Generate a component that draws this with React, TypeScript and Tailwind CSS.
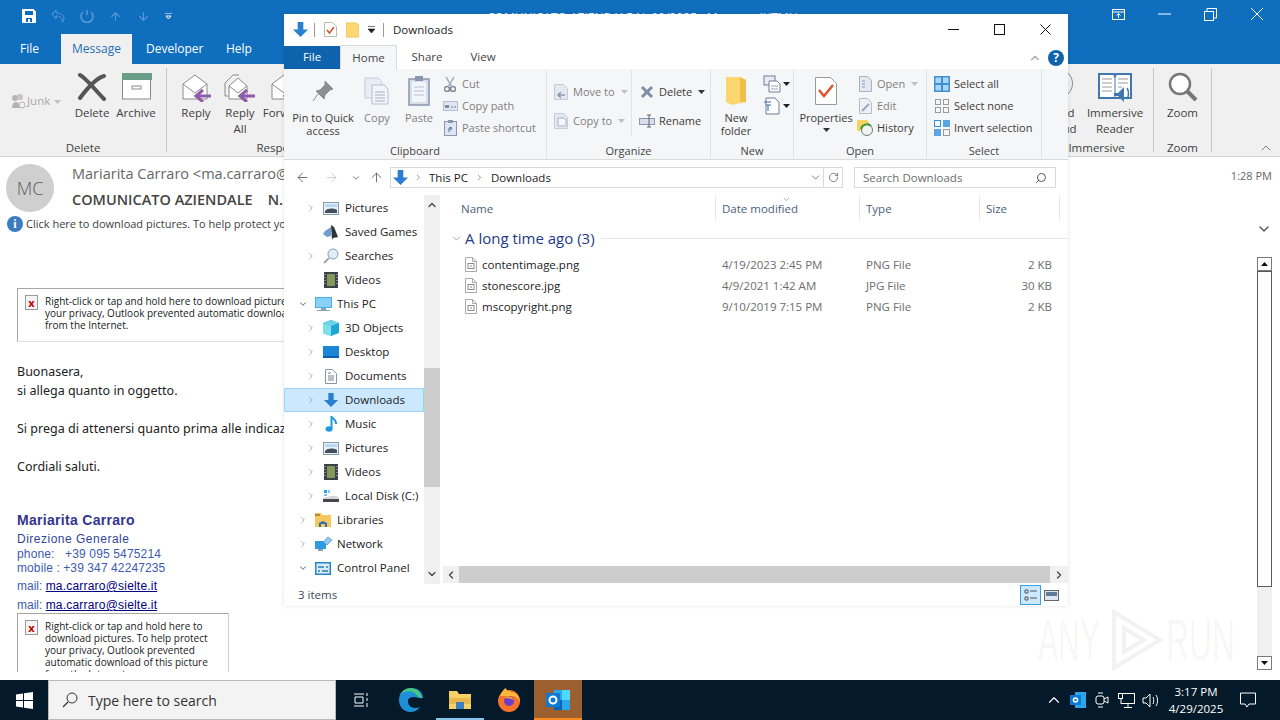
import { ReactNode } from "react";
import { ArrowLeft, ArrowRight, ArrowUp, ChevronDown, ChevronRight, ChevronUp, RotateCw, Search } from "lucide-react";

function Svg({ w = 16, h = 16, vb, children }: { w?: number; h?: number; vb?: string; children: ReactNode }) {
  return (
    <svg width={w} height={h} viewBox={vb ?? `0 0 ${w} ${h}`} fill="none" className="shrink-0">
      {children}
    </svg>
  );
}

const Caret = ({ color = "#444" }: { color?: string }) => (
  <Svg w={7} h={4}><path d="M0 0h7L3.5 4z" fill={color} /></Svg>
);

const BlueDown = ({ s = 18 }: { s?: number }) => (
  <Svg w={s} h={s} vb="0 0 18 18"><path d="M6 1h6v8h5l-8 8-8-8h5z" fill="#2a7fd0" /></Svg>
);

const FileIco = () => (
  <Svg w={12} h={15}>
    <path d="M.5.5h7l4 4v10H.5z" fill="#fff" stroke="#a9a9a9" />
    <path d="M7.5.5v4h4" stroke="#a9a9a9" />
    <rect x="3" y="6.5" width="6" height="5" stroke="#8b8b8b" />
    <rect x="5" y="8.5" width="2" height="1" fill="#8b8b8b" />
  </Svg>
);

const BrokenImg = () => (
  <div className="w-[13px] h-[15px] shrink-0 border border-[#9a9a9a] bg-[#f6f3f3] flex items-center justify-center text-[#c00000] text-[11px] font-bold leading-none">
    x
  </div>
);

/* ---------- Outlook ---------- */

function EnvelopeReply({ all }: { all?: boolean }) {
  return (
    <Svg w={32} h={30}>
      {all && <path d="M1 11 9 3h6M1 11v13h3" stroke="#8a8a8a" />}
      <path d={all ? "M5 14l9-8 9 8v13H5z" : "M3 12l12-9 12 9v15H3z"} fill="#fff" stroke="#8a8a8a" />
      <path d={all ? "M5 14l9 7 9-7" : "M3 12l12 9 12-9"} stroke="#8a8a8a" />
      <path d="M17 24h14M23 18l-7 6 7 6" stroke="#8f5cab" strokeWidth="3" />
    </Svg>
  );
}

function OutlookBtn({ w, icon, lines }: { w: number; icon: ReactNode; lines: string[] }) {
  return (
    <div className="flex flex-col items-center shrink-0" style={{ width: w }}>
      <div className="h-[37px] flex items-center justify-center">{icon}</div>
      {lines.map((l) => (
        <div key={l} className="leading-[16px] whitespace-nowrap">{l}</div>
      ))}
    </div>
  );
}

function OutlookGroup({ label, w, children, sep = true }: { label: string; w: number; children?: ReactNode; sep?: boolean }) {
  return (
    <div className="shrink-0 flex h-[88px]" style={{ width: w }}>
      <div className="flex-1 min-w-0 flex flex-col">
        <div className="flex-1 flex">{children}</div>
        <div className="text-center leading-[16px] h-[16px] whitespace-nowrap">{label}</div>
      </div>
      {sep && <div className="w-px h-[84px] bg-[#c6c6c6]" />}
    </div>
  );
}

function OutlookRibbon() {
  return (
    <div className="h-[93px] bg-[#f0f0f0] border-b border-[#d2d2d2] flex justify-between pt-[4px] text-[#404040] text-[11.5px] shrink-0">
      <div className="flex">
        <OutlookGroup label="Delete" w={167}>
          <div className="flex w-[76px] pl-[11px] pt-[25px] text-[#a8a8a8] gap-[2px] items-start">
            <Svg w={14} h={16}>
              <circle cx="4" cy="5" r="3" fill="#b4b4b4" />
              <circle cx="9" cy="4" r="3" fill="#c4c4c4" />
              <path d="M1 15c0-4 2-6 4-6s4 2 4 6z" fill="#b4b4b4" />
              <circle cx="11" cy="12" r="3" fill="#f0f0f0" stroke="#b4b4b4" />
            </Svg>
            <span className="leading-[16px]">Junk</span>
            <span className="pt-[7px] pl-[2px]"><Caret color="#c0c0c0" /></span>
          </div>
          <OutlookBtn w={32} lines={["Delete"]} icon={
            <Svg w={30} h={28}><path d="M3 2c6 3 17 17 24 24M27 3C19 5 9 17 3 25" stroke="#555" strokeWidth="4" strokeLinecap="round" /></Svg>
          } />
          <OutlookBtn w={56} lines={["Archive"]} icon={
            <Svg w={31} h={27}>
              <rect x="1.5" y="1" width="28" height="25" fill="#fff" stroke="#8a8a8a" />
              <rect x="1" y="0" width="30" height="7" fill="#6b9d8b" />
              <rect x="11" y="13" width="9" height="3" stroke="#8a8a8a" />
            </Svg>
          } />
        </OutlookGroup>
        <OutlookGroup label="Respond" w={226} sep={false}>
          <div className="flex pl-[7px]">
            <OutlookBtn w={44} lines={["Reply"]} icon={<EnvelopeReply />} />
            <OutlookBtn w={44} lines={["Reply", "All"]} icon={<EnvelopeReply all />} />
            <OutlookBtn w={46} lines={["Forward"]} icon={<EnvelopeReply />} />
          </div>
        </OutlookGroup>
      </div>
      <div className="flex">
        <OutlookGroup label="Immersive" w={114}>
          <OutlookBtn w={42} lines={["Read", "Aloud"]} icon={
            <Svg w={24} h={30}>
              <path d="M2 29l5-13 5 13z" fill="#555" />
              <path d="M15 4c4 4 4 10 0 15M19 1c6 6 6 15 0 21" stroke="#888" />
            </Svg>
          } />
          <OutlookBtn w={66} lines={["Immersive", "Reader"]} icon={
            <Svg w={34} h={30}>
              <path d="M1 2h15l1 2 1-2h15v24H1z" fill="#fff" stroke="#3f77ae" strokeWidth="2" />
              <path d="M17 4v22" stroke="#3f77ae" />
              <path d="M4 7h10M4 11h10M4 15h10M4 19h10M20 7h10M20 11h10M20 15h4" stroke="#9a9a9a" />
              <path d="M16 21h4l6-6v15l-6-6h-4z" fill="#3f77ae" />
              <path d="M29 16c2 3 2 8 0 11" stroke="#3f77ae" strokeWidth="1.5" />
            </Svg>
          } />
        </OutlookGroup>
        <OutlookGroup label="Zoom" w={58}>
          <OutlookBtn w={57} lines={["Zoom"]} icon={
            <Svg w={30} h={30}>
              <circle cx="12" cy="12" r="10" stroke="#777" strokeWidth="2.5" fill="#fff" />
              <path d="M19 19l9 9" stroke="#777" strokeWidth="4" />
            </Svg>
          } />
        </OutlookGroup>
        <div className="w-[68px] flex flex-col justify-end items-end pr-[6px]">
          <ChevronUp size={16} strokeWidth={1.25} className="text-[#666]" />
        </div>
      </div>
    </div>
  );
}

function QuickAccess() {
  return (
    <div className="h-[32px] relative flex items-center pl-[22px] gap-[15px] text-white shrink-0">
      <Svg w={14} h={14}>
        <path d="M.5.5h11l2 2v11H.5z" fill="#fff" stroke="#fff" />
        <rect x="3" y="2" width="8" height="4" fill="#0f6cbd" />
        <rect x="4" y="9" width="6" height="4" fill="#0f6cbd" />
        <rect x="6" y="10" width="2" height="3" fill="#fff" />
      </Svg>
      <Svg w={14} h={14}><path d="M1 5l4-4v3c5 0 8 2 8 6 0 1-1 3-2 3 1-4-2-6-6-6v3z" stroke="#5a9bd8" /></Svg>
      <Svg w={14} h={14}><path d="M3 3a6 6 0 1 0 8 0M7 1v5" stroke="#5a9bd8" strokeWidth="1.5" /></Svg>
      <span className="text-[#5a9bd8]"><ArrowUp size={13} /></span>
      <span className="text-[#5a9bd8]"><ArrowUp size={13} className="rotate-180" /></span>
      <Svg w={7} h={7}><path d="M0 0h7M1 3h5l-2.5 3z" stroke="#fff" /></Svg>
      <div className="absolute left-[487px] top-[10px] text-[12px] text-[#e8f0fa] whitespace-nowrap leading-[16px]">
        COMUNICATO AZIENDALE N. 00/2025 - Message (HTML)
      </div>
      <div className="absolute right-[16px] top-[7px] flex items-center gap-[33px]">
        <Svg w={13} h={11}>
          <rect x=".5" y=".5" width="12" height="10" stroke="#fff" />
          <path d="M1 3h11M6.5 9V5M4.500 6.500l2-2 2 2" stroke="#fff" />
        </Svg>
        <Svg w={13} h={2}><path d="M0 1h13" stroke="#fff" /></Svg>
        <Svg w={13} h={13}>
          <rect x=".5" y="3.500" width="9" height="9" stroke="#fff" />
          <path d="M3 3V.5h9.500V10H10" stroke="#fff" />
        </Svg>
        <Svg w={14} h={14}><path d="M1 1l12 12M13 1L1 13" stroke="#fff" /></Svg>
      </div>
    </div>
  );
}

function OutlookTabs() {
  return (
    <div className="h-[32px] flex items-end text-[12px] text-white shrink-0">
      <div className="w-[61px] h-[30px] pl-[20px] leading-[30px]">File</div>
      <div className="w-[71px] h-[30px] bg-[#f0f0f0] text-[#1e6fb8] text-center leading-[30px]">Message</div>
      <div className="w-[94px] h-[30px] pl-[14px] leading-[30px]">Developer</div>
      <div className="w-[50px] h-[30px] leading-[30px]">Help</div>
    </div>
  );
}

function BrokenBox({ lines, width, height }: { lines: string[]; width: number; height: number }) {
  return (
    <div className="border border-[#a6a6a6] border-r-[#d0d0d0] border-b-[#e0e0e0] flex gap-[7px] pl-[7px] pt-[6px] overflow-hidden" style={{ width, height }}>
      <BrokenImg />
      <div className="text-[10px] leading-[12px] text-[#202020] whitespace-nowrap">
        {lines.map((l) => <div key={l}>{l}</div>)}
      </div>
    </div>
  );
}

function MessageBody() {
  return (
    <div className="flex-1 flex min-h-0">
      <div className="flex-1 h-[427px] overflow-hidden pt-[43px] pl-[17px]">
        <BrokenBox
          width={640}
          height={54}
          lines={[
            "Right-click or tap and hold here to download pictures. To help protect",
            "your privacy, Outlook prevented automatic download of this picture",
            "from the Internet.",
          ]}
        />
        <div className="mt-[20px] text-[12.5px] leading-[19px] text-[#222] font-['Noto_Sans',sans-serif]">
          <p>Buonasera,</p>
          <p>si allega quanto in oggetto.</p>
          <p className="mt-[19px] whitespace-nowrap">Si prega di attenersi quanto prima alle indicazioni riportate nel documento allegato.</p>
          <p className="mt-[19px]">Cordiali saluti.</p>
        </div>
        <div className="mt-[36px] font-['Liberation_Sans',sans-serif] text-[12px] leading-[14px] text-[#3d5bb0]">
          <p className="text-[14px] leading-[17px] font-bold text-[#33348e] tracking-[.3px]">Mariarita Carraro</p>
          <p className="mt-[2px] text-[#33469a] leading-[16px] tracking-[.5px]">Direzione Generale</p>
          <p className="leading-[14px] tracking-[.15px]">phone: &nbsp; +39 095 5475214</p>
          <p className="leading-[14px] tracking-[.1px]">mobile : +39 347 42247235</p>
          <p className="mt-[2px] leading-[19px]">mail: <span className="text-[#000080] underline tracking-[.2px]">ma.carraro@sielte.it</span></p>
          <p className="leading-[19px]">mail: <span className="text-[#000080] underline tracking-[.2px]">ma.carraro@sielte.it</span></p>
        </div>
        <div className="-mt-[2px]">
          <BrokenBox
            width={212}
            height={80}
            lines={[
              "Right-click or tap and hold here to",
              "download pictures. To help protect",
              "your privacy, Outlook prevented",
              "automatic download of this picture",
              "from the Internet.",
            ]}
          />
        </div>
      </div>
      <div className="w-[15px] mr-[8px] mt-[12px] h-[413px] flex flex-col bg-[#f0f0f0]">
        <div className="h-[14px] border border-[#7a7a7a] bg-white flex items-center justify-center rotate-180"><Caret color="#111" /></div>
        <div className="h-[316px] border border-[#5a5a5a] bg-white" />
        <div className="flex-1" />
        <div className="h-[14px] border border-[#7a7a7a] bg-white flex items-center justify-center"><Caret color="#111" /></div>
      </div>
    </div>
  );
}

function Outlook() {
  return (
    <div className="flex-1 min-h-0 flex flex-col">
      <div className="bg-[#106ebe]">
        <QuickAccess />
        <OutlookTabs />
      </div>
      <OutlookRibbon />
      <div className="h-[88px] shrink-0 text-[#404040]">
        <div className="h-[60px] flex pt-[7px] pl-[6px] pr-[8px]">
          <div className="w-[48px] h-[48px] rounded-full bg-[#cfcfcf] text-[#5c5c5c] text-[18px] flex items-center justify-center font-light">MC</div>
          <div className="ml-[18px] flex-1 whitespace-pre">
            <div className="text-[14.5px] leading-[20px] text-[#666]">Mariarita Carraro &lt;ma.carraro@sielte.it&gt;</div>
            <div className="mt-[6px] text-[14.5px] leading-[20px] font-semibold text-[#444]">COMUNICATO AZIENDALE    N.  00/2025</div>
          </div>
          <div className="text-[11px] text-[#666] leading-[24px]">1:28 PM</div>
        </div>
        <div className="flex items-center pl-[7px] pr-[8px] h-[14px] text-[11px]">
          <div className="w-[16px] h-[16px] rounded-full bg-[#3b7cc4] text-white text-[12px] font-bold text-center leading-[16px] font-['Liberation_Serif',serif] mr-[3px]">i</div>
          <span className="flex-1 whitespace-nowrap">Click here to download pictures. To help protect your privacy, Outlook prevented automatic download of some pictures in this message.</span>
          <ChevronDown size={16} className="text-[#555] mt-[10px]" />
        </div>
      </div>
      <MessageBody />
    </div>
  );
}

/* ---------- Explorer ---------- */

function SmallRow({ icon, label, dim, caret }: { icon: ReactNode; label: string; dim?: boolean; caret?: boolean }) {
  return (
    <div className={`h-[22px] flex items-center gap-[5px] whitespace-nowrap ${dim ? "text-[#7f7f7f]" : ""}`}>
      <span className="w-[14px] flex justify-center shrink-0">{icon}</span>
      {label}
      {caret && <span className="ml-[1px]"><Caret color={dim ? "#c0c0c0" : "#333"} /></span>}
    </div>
  );
}

function BigBtn({ w, icon, lines, dim, caret }: { w: number; icon: ReactNode; lines: string[]; dim?: boolean; caret?: boolean }) {
  return (
    <div className={`flex flex-col items-center shrink-0 ${dim ? "text-[#7f7f7f]" : ""}`} style={{ width: w }}>
      <div className="h-[41px] flex items-center justify-center">{icon}</div>
      {lines.map((l) => (
        <div key={l} className="leading-[13px] whitespace-nowrap">{l}</div>
      ))}
      {caret && <div className="mt-[4px]"><Caret color="#333" /></div>}
    </div>
  );
}

function Group({ label, w, children }: { label: string; w: number; children: ReactNode }) {
  return (
    <div className="shrink-0 flex flex-col border-r border-[#e2e3e4] h-[88px] mt-[1px]" style={{ width: w }}>
      <div className="flex-1 flex">{children}</div>
      <div className="h-[14px] leading-[14px] text-center text-[#444]">{label}</div>
    </div>
  );
}

const doc = "#fff";

function ExplorerRibbon() {
  return (
    <div className="h-[91px] bg-[#f5f6f7] border-b border-[#dadbdc] flex text-[11px] text-[#3c3c3c]">
      <Group label="Clipboard" w={263}>
        <BigBtn w={78} lines={["Pin to Quick", "access"]} icon={
          <Svg w={22} h={22}><path d="M13 1l8 8-3 1-5 5-1 4-8-8 4-1 5-5zM6 14l-5 7" fill="#8e8e8e" stroke="#8e8e8e" /></Svg>
        } />
        <BigBtn w={30} dim lines={["Copy"]} icon={
          <Svg w={26} h={28}>
            <path d="M1 1h13l4 4v16H1z" fill="#e9eef6" stroke="#c3cad8" />
            <path d="M8 8h12l4 4v15H8z" fill="#f3f5fa" stroke="#b5bdcd" />
            <path d="M11 15h10M11 18h10M11 21h10M11 24h10" stroke="#a4aec4" />
          </Svg>
        } />
        <BigBtn w={54} dim lines={["Paste"]} icon={
          <Svg w={22} h={30}>
            <rect x="1" y="3" width="20" height="26" fill="#d8dfec" stroke="#8a96ad" strokeWidth="1.5" />
            <rect x="4" y="6" width="14" height="20" fill="#f2f5fa" />
            <rect x="7" y="0" width="8" height="5" fill="#8a96ad" />
            <path d="M6 11h10M6 15h10M6 19h10" stroke="#b6c0d2" />
          </Svg>
        } />
        <div className="pt-[3px] ml-[-3px]">
          <SmallRow dim label="Cut" icon={
            <Svg w={12} h={16}><circle cx="3" cy="13" r="2.500" stroke="#7d8896" strokeWidth="1.5" /><circle cx="9" cy="13" r="2.500" stroke="#7d8896" strokeWidth="1.5" /><path d="M2 1l6 10M10 1L4 11" stroke="#a8b0bb" strokeWidth="1.5" /></Svg>
          } />
          <SmallRow dim label="Copy path" icon={
            <Svg w={15} h={10}><rect x=".5" y=".5" width="14" height="9" fill="#e0e6f2" stroke="#b4bfd4" /><path d="M2 4l1 3 1-3 1 3 1-3M8 6h2M11 6h2" stroke="#6d7d9c" /></Svg>
          } />
          <SmallRow dim label="Paste shortcut" icon={
            <Svg w={13} h={16}><rect x=".5" y="1.500" width="12" height="14" fill="#dfe5f0" stroke="#8a96ad" /><rect x="4" y="0" width="5" height="3" fill="#8a96ad" /><path d="M5 12V8h3M6 7l2 1.500L6 10" stroke="#4f6a94" /></Svg>
          } />
        </div>
      </Group>
      <Group label="Organize" w={164}>
        <div className="pt-[11px] pl-[7px] w-[85px] border-r border-[#e2e3e4] mb-[8px] text-[#7f7f7f]">
          <div className="h-[29px]">
            <SmallRow dim caret label="Move to" icon={
              <Svg w={14} h={16}><path d="M.5.5h9l4 4v11H.5z" fill="#e4e8f0" stroke="#c5ccd8" /><path d="M11 11H4M7 8l-3 3 3 3" stroke="#8b9ab3" strokeWidth="1.5" /></Svg>
            } />
          </div>
          <SmallRow dim caret label="Copy to" icon={
            <Svg w={14} h={16}><path d="M.5.5h9l4 4v11H.5z" fill="#e4e8f0" stroke="#c5ccd8" /><path d="M4 5h6l2 2v6H4z" fill="#f5f7fa" stroke="#a7b2c4" /></Svg>
          } />
        </div>
        <div className="pt-[11px] pl-[8px]">
          <div className="h-[29px]">
            <SmallRow caret label="Delete" icon={
              <Svg w={14} h={14}><path d="M2 2l10 10M12 2L2 12" stroke="#7d8ea6" strokeWidth="3" /></Svg>
            } />
          </div>
          <SmallRow label="Rename" icon={
            <Svg w={16} h={14}><rect x=".5" y="4.500" width="15" height="6" fill="#d7deea" stroke="#8a96ad" /><path d="M10 1v12M8 1h4M8 13h4" stroke="#55637a" /></Svg>
          } />
        </div>
      </Group>
      <Group label="New" w={83}>
        <BigBtn w={50} lines={["New", "folder"]} icon={
          <Svg w={22} h={30}><path d="M1 1h14l6 3v22l-14 3-6-3z" fill="#fcd770" /><path d="M15 1l6 3v22h-6z" fill="#f0bf49" /></Svg>
        } />
        <div className="pt-[3px] pl-[2px]">
          <div className="h-[22px] flex items-center gap-[2px]">
            <Svg w={18} h={18}><rect x="1" y="1" width="11" height="9" fill="#e8eef7" stroke="#6e7d94" /><path d="M6 6h8l3 3v8H6z" fill="#fff" stroke="#6e7d94" /><path d="M8 11h7M8 14h7" stroke="#9aa6b8" /></Svg>
            <Caret color="#222" />
          </div>
          <div className="h-[22px] flex items-center gap-[2px]">
            <Svg w={18} h={18}><path d="M3 1h9l4 4v12H3z" fill="#fff" stroke="#6e7d94" /><path d="M1 5h7M3 8h5M5 8v6" stroke="#2d6da8" /></Svg>
            <Caret color="#222" />
          </div>
        </div>
      </Group>
      <Group label="Open" w={133}>
        <BigBtn w={64} caret lines={["Properties"]} icon={
          <Svg w={22} h={28}>
            <path d="M.5.500h15l6 6v21H.5z" fill="#fff" stroke="#9a9a9a" />
            <path d="M4 13l5 6 9-11" stroke="#e0542b" strokeWidth="2.500" />
          </Svg>
        } />
        <div className="pt-[3px]">
          <SmallRow dim caret label="Open" icon={
            <Svg w={13} h={16}><path d="M.5.500h8l4 4v11H.5z" fill="#e4e8f0" stroke="#a8b2c4" /><path d="M3 5h3M3 8h3M3 11h3" stroke="#8b9ab3" /></Svg>
          } />
          <SmallRow dim label="Edit" icon={
            <Svg w={13} h={16}><path d="M.5.500h8l4 4v11H.5z" fill="#eef1f6" stroke="#b4bdcc" /><path d="M3 13l7-7" stroke="#9aa8bd" strokeWidth="2" /></Svg>
          } />
          <SmallRow label="History" icon={
            <Svg w={16} h={16}>
              <path d="M0 0h10l2 3v8H0z" fill="#f4d35e" />
              <circle cx="10" cy="10" r="5.500" fill="#f2f2f2" stroke="#777" />
              <path d="M4 9a6 6 0 0 1 10-3" stroke="#3a9a3a" strokeWidth="2" />
            </Svg>
          } />
        </div>
      </Group>
      <Group label="Select" w={115}>
        <div className="pt-[3px] pl-[8px] text-[#3c3c3c]">
          <SmallRow label="Select all" icon={
            <Svg w={16} h={16}><rect width="16" height="16" fill="#3d8fd6" /><rect x="1.500" y="1.500" width="5.500" height="5.500" fill="#a9d6f7" /><rect x="9" y="1.500" width="5.500" height="5.500" fill="#a9d6f7" /><rect x="1.500" y="9" width="5.500" height="5.500" fill="#a9d6f7" /><rect x="9" y="9" width="5.500" height="5.500" fill="#a9d6f7" /></Svg>
          } />
          <SmallRow label="Select none" icon={
            <Svg w={14} h={14}><rect x=".5" y=".5" width="5" height="5" stroke="#9a9a9a" /><rect x="8.500" y=".5" width="5" height="5" stroke="#9a9a9a" /><rect x=".5" y="8.500" width="5" height="5" stroke="#9a9a9a" /><rect x="8.500" y="8.500" width="5" height="5" stroke="#9a9a9a" /></Svg>
          } />
          <SmallRow label="Invert selection" icon={
            <Svg w={16} h={16}><rect x=".5" y=".5" width="6" height="6" stroke="#3d8fd6" /><rect x="9" y="0" width="7" height="7" fill="#5aa5e3" /><rect x="0" y="9" width="7" height="7" fill="#5aa5e3" /><rect x="9.500" y="9.500" width="6" height="6" stroke="#9a9a9a" /></Svg>
          } />
        </div>
      </Group>
    </div>
  );
}

function ExplorerTitle() {
  return (
    <>
      <div className="h-[31px] flex items-center pl-[8px] text-[11.5px] text-[#222]">
        <BlueDown s={17} />
        <div className="w-px h-[14px] bg-[#999] ml-[5px]" />
        <span className="ml-[9px]">
          <Svg w={13} h={15}><path d="M.5.500h8l4 4v10H.5z" fill={doc} stroke="#bba" /><path d="M3 8l2.500 3L10 5" stroke="#d8502a" strokeWidth="1.500" /></Svg>
        </span>
        <span className="ml-[9px]">
          <Svg w={13} h={16}><path d="M0 1h10l3 2v12H0z" fill="#fcd874" stroke="#efc45a" /></Svg>
        </span>
        <span className="ml-[9px]"><Svg w={7} h={7}><path d="M0 .5h7M0 3h7L3.500 7z" fill="#222" stroke="#222" strokeWidth=".6" /></Svg></span>
        <div className="w-px h-[14px] bg-[#999] ml-[8px]" />
        <span className="ml-[9px]">Downloads</span>
        <div className="ml-auto flex items-center gap-[35px] pr-[17px]">
          <Svg w={11} h={1}><path d="M0 .5h11" stroke="#111" /></Svg>
          <Svg w={11} h={11}><rect x=".5" y=".5" width="10" height="10" stroke="#111" /></Svg>
          <Svg w={11} h={11}><path d="M.5.500l10 10M10.500.500l-10 10" stroke="#111" /></Svg>
        </div>
      </div>
      <div className="h-[24px] flex items-end text-[11.5px] text-[#444]">
        <div className="w-[56px] h-[23px] bg-[#0f63ad] text-white text-center leading-[22px]">File</div>
        <div className="w-[57px] h-[25px] bg-[#f5f6f7] border-x border-t border-[#dadbdc] text-center leading-[24px] relative top-[1px]">Home</div>
        <div className="w-[60px] h-[23px] text-center leading-[22px]">Share</div>
        <div className="w-[52px] h-[23px] text-center leading-[22px]">View</div>
        <div className="ml-auto h-[23px] flex items-center gap-[6px] pr-[4px]">
          <ChevronUp size={14} className="text-[#aaa]" />
          <div className="w-[16px] h-[16px] rounded-full bg-[#0f63ad] text-white text-[12px] font-bold text-center leading-[16px]">?</div>
        </div>
      </div>
    </>
  );
}

function AddressBar() {
  return (
    <div className="h-[35px] flex items-center text-[11.5px]">
      <div className="w-[106px] flex items-center pl-[11px] text-[#666]">
        <ArrowLeft size={15} strokeWidth={1.5} />
        <ArrowRight size={15} strokeWidth={1.5} className="ml-[14px] text-[#ccc]" />
        <ChevronDown size={10} strokeWidth={2} className="ml-[12px]" />
        <ArrowUp size={15} strokeWidth={1.5} className="ml-[8px]" />
      </div>
      <div className="w-[453px] h-[21px] border border-[#d9d9d9] flex items-center text-[#222]">
        <span className="ml-[1px]"><BlueDown s={17} /></span>
        <ChevronRight size={9} strokeWidth={2} className="ml-[5px] text-[#777]" />
        <span className="ml-[6px]">This PC</span>
        <ChevronRight size={9} strokeWidth={2} className="ml-[7px] text-[#777]" />
        <span className="ml-[7px]">Downloads</span>
        <ChevronDown size={13} strokeWidth={1.5} className="ml-auto mr-[1px] text-[#666]" />
        <div className="w-[19px] h-full border-l border-[#d9d9d9] flex items-center justify-center">
          <RotateCw size={11} className="text-[#777]" />
        </div>
      </div>
      <div className="ml-[11px] w-[202px] h-[21px] border border-[#d9d9d9] flex items-center pl-[8px] text-[#6d6d6d] text-[11.5px]">
        Search Downloads
        <Search size={12} strokeWidth={2} className="ml-auto mr-[8px] -scale-x-100 text-[#555]" />
      </div>
    </div>
  );
}

const icons: Record<string, ReactNode> = {
  pictures: (
    <Svg w={16} h={13}><rect x=".5" y=".5" width="15" height="12" fill="#e9f1f8" stroke="#8798ab" /><path d="M2 9c3-3 8-3 12-1v3H2z" fill="#41505f" /><rect x="2" y="2" width="12" height="3" fill="#bcd8ee" /></Svg>
  ),
  games: (
    <Svg w={18} h={16}><path d="M9 1l3 2 2 5 2 5-5 1-1 2z" fill="#2e3338" /><path d="M9 3L3 7 1 10l4 3 4-1z" fill="#6f9fd2" /></Svg>
  ),
  search: (
    <Svg w={16} h={16}><circle cx="10" cy="6" r="5" fill="#dfeefa" stroke="#8a9aac" /><path d="M6 10l-5 5" stroke="#9aa5b2" strokeWidth="2" /></Svg>
  ),
  videos: (
    <Svg w={14} h={16}><rect width="14" height="16" fill="#3a3f48" /><rect x="3" y="2" width="8" height="12" fill="#7f9a5f" /><path d="M1 2v12M13 2v12" stroke="#cfd4da" strokeDasharray="1 2" /></Svg>
  ),
  pc: (
    <Svg w={17} h={15}><rect y="0" width="17" height="11" fill="#4aaeea" /><rect x="1" y="1" width="15" height="9" fill="#89d0f7" /><rect x="6" y="11" width="5" height="2" fill="#8aa0b5" /><rect x="2" y="13" width="13" height="1" fill="#8aa0b5" /></Svg>
  ),
  objects: (
    <Svg w={16} h={16}><path d="M8 0l8 3v10l-8 3-8-3V3z" fill="#1fa6d8" /><path d="M0 3l8 3 8-3-8-3z" fill="#6fd3e8" /><path d="M0 3l8 3v10L0 13z" fill="#7fdfe6" /></Svg>
  ),
  desktop: (
    <Svg w={16} h={12}><rect width="16" height="12" fill="#1c86d8" /><rect y="10" width="16" height="2" fill="#0c5ea8" /></Svg>
  ),
  documents: (
    <Svg w={12} h={15}><path d="M.5.500h7l4 4v10H.5z" fill="#fff" stroke="#8898ab" /><path d="M3 4h3M3 7h6M3 9h6M3 11h6" stroke="#6e8198" /></Svg>
  ),
  downloads: <BlueDown s={16} />,
  music: (
    <Svg w={12} h={16}><ellipse cx="4" cy="13" rx="3.500" ry="2.800" fill="#1e9ae0" /><path d="M6.500 13V1c2 2 5 3 4.500 7" stroke="#1e9ae0" strokeWidth="2" /></Svg>
  ),
  disk: (
    <Svg w={16} h={14}><rect x="1" y="1" width="3" height="3" fill="#29a3e0" /><rect x="5" y="1" width="2" height="3" fill="#7cc6ec" /><rect x="1" y="5" width="3" height="2" fill="#7cc6ec" /><path d="M6 7h8l2 3H0l2-2h4z" fill="#d6d6d6" /><rect y="10" width="16" height="3" fill="#44484d" /></Svg>
  ),
  libraries: (
    <Svg w={16} h={15}><path d="M0 0h6l1 2h9v12H0z" fill="#f7c95c" /><rect x="0" y="1" width="5" height="2" fill="#b98a3a" /><path d="M4 14v-4l4-2 4 2v4h-2v-3H6v3z" fill="#2e6fb4" /></Svg>
  ),
  network: (
    <Svg w={17} h={16}><rect y="5" width="11" height="8" fill="#2e9ae0" /><path d="M3 13h5v2H3z" fill="#8aa0b5" /><path d="M8 6l5-5 4 3-5 5z" fill="#8fc9ef" stroke="#3f83bf" strokeWidth=".6" /></Svg>
  ),
  panel: (
    <Svg w={16} h={13}><rect width="16" height="13" fill="#2a85c7" /><rect x="1.500" y="1.500" width="13" height="10" fill="#d5ecf9" /><path d="M3 5h6M11 5h2M3 9h2M7 9h6" stroke="#3179ad" strokeWidth="1.500" /></Svg>
  ),
};

const tree: { label: string; icon: string; level: 0 | 1; state?: "open" | "closed"; selected?: boolean }[] = [
  { label: "Pictures", icon: "pictures", level: 1, state: "closed" },
  { label: "Saved Games", icon: "games", level: 1 },
  { label: "Searches", icon: "search", level: 1, state: "closed" },
  { label: "Videos", icon: "videos", level: 1 },
  { label: "This PC", icon: "pc", level: 0, state: "open" },
  { label: "3D Objects", icon: "objects", level: 1, state: "closed" },
  { label: "Desktop", icon: "desktop", level: 1, state: "closed" },
  { label: "Documents", icon: "documents", level: 1, state: "closed" },
  { label: "Downloads", icon: "downloads", level: 1, state: "closed", selected: true },
  { label: "Music", icon: "music", level: 1, state: "closed" },
  { label: "Pictures", icon: "pictures", level: 1, state: "closed" },
  { label: "Videos", icon: "videos", level: 1, state: "closed" },
  { label: "Local Disk (C:)", icon: "disk", level: 1, state: "closed" },
  { label: "Libraries", icon: "libraries", level: 0, state: "closed" },
  { label: "Network", icon: "network", level: 0, state: "closed" },
  { label: "Control Panel", icon: "panel", level: 0, state: "open" },
];

function TreeRow({ item }: { item: (typeof tree)[number] }) {
  return (
    <div className={`h-[24px] flex items-center border ${item.selected ? "bg-[#cce8ff] border-[#99d1ff]" : "border-transparent"} ${item.level === 1 ? "pl-[21px]" : "pl-[13px]"}`}>
      <span className="w-[10px] flex justify-center shrink-0">
        {item.state === "closed" && <ChevronRight size={14} strokeWidth={2} className="text-[#9a9a9a]" />}
        {item.state === "open" && <ChevronDown size={14} strokeWidth={2} className="text-[#444]" />}
      </span>
      <span className="w-[18px] ml-[6px] flex justify-center shrink-0">{icons[item.icon]}</span>
      <span className="ml-[5px] whitespace-nowrap text-[#222]">{item.label}</span>
    </div>
  );
}

const files = [
  { name: "contentimage.png", date: "4/19/2023 2:45 PM", type: "PNG File", size: "2 KB" },
  { name: "stonescore.jpg", date: "4/9/2021 1:42 AM", type: "JPG File", size: "30 KB" },
  { name: "mscopyright.png", date: "9/10/2019 7:15 PM", type: "PNG File", size: "2 KB" },
];

function FilePane() {
  return (
    <div className="flex-1 min-w-0 flex flex-col pl-[3px]">
      <div className="h-[25px] flex items-center text-[#4c607a] relative">
        <div className="w-[273px] h-[22px] leading-[24px] pl-[18px] border-r border-[#e5e5e5]">Name</div>
        <div className="w-[144px] h-[22px] leading-[24px] pl-[6px] border-r border-[#e5e5e5] relative">
          Date modified
          <ChevronUp size={9} className="absolute left-[66px] -top-[2px] rotate-180 text-[#888]" />
        </div>
        <div className="w-[120px] h-[22px] leading-[24px] pl-[6px] border-r border-[#e5e5e5]">Type</div>
        <div className="w-[80px] h-[22px] leading-[24px] pl-[6px] border-r border-[#e5e5e5]">Size</div>
      </div>
      <div className="flex-1 min-h-0">
        <div className="mt-[7px] h-[22px] flex items-center pl-[7px] text-[#1e3a8a]">
          <ChevronDown size={13} strokeWidth={1.25} className="text-[#6d7f9c]" />
          <span className="ml-[2px] text-[15px] whitespace-nowrap">A long time ago (3)</span>
          <div className="flex-1 h-px bg-[#e3e9f1] ml-[6px]" />
        </div>
        <div className="mt-[5px]">
          {files.map((f) => (
            <div key={f.name} className="h-[21px] flex items-center">
              <div className="w-[273px] flex items-center gap-[5px] pl-[22px] text-[#222]">
                <FileIco />
                {f.name}
              </div>
              <div className="w-[144px] pl-[6px] text-[#6d6d6d]">{f.date}</div>
              <div className="w-[120px] pl-[6px] text-[#6d6d6d]">{f.type}</div>
              <div className="w-[72px] text-right text-[#6d6d6d]">{f.size}</div>
            </div>
          ))}
        </div>
      </div>
      <div className="h-[17px] mb-[1px] flex bg-[#f0f0f0]">
        <div className="w-[16px] flex items-center justify-center"><ChevronRight size={12} strokeWidth={2.5} className="rotate-180 text-[#444]" /></div>
        <div className="flex-1 bg-[#cdcdcd]" />
        <div className="w-[18px] flex items-center justify-center"><ChevronRight size={12} strokeWidth={2.5} className="text-[#444]" /></div>
      </div>
    </div>
  );
}

function Explorer() {
  return (
    <div className="absolute left-[284px] top-[14px] w-[784px] h-[592px] bg-white flex flex-col text-[11.5px] shadow-[0_0_4px_rgba(0,0,0,0.12)]">
      <ExplorerTitle />
      <ExplorerRibbon />
      <AddressBar />
      <div className="flex-1 min-h-0 flex">
        <div className="w-[140px] h-[389px] overflow-hidden pt-[1px]">
          {tree.map((t, i) => <TreeRow key={i} item={t} />)}
        </div>
        <div className="w-[16px] h-[389px] bg-[#f0f0f0] flex flex-col">
          <div className="h-[20px] flex items-center justify-center"><ChevronUp size={12} strokeWidth={2.5} className="text-[#444]" /></div>
          <div className="mt-[153px] h-[119px] bg-[#cdcdcd]" />
          <div className="mt-auto h-[20px] flex items-center justify-center"><ChevronDown size={12} strokeWidth={2.5} className="text-[#444]" /></div>
        </div>
        <FilePane />
      </div>
      <div className="h-[22px] flex items-center pl-[14px] text-[#3c4a5e]">
        3 items
        <div className="ml-auto mr-[8px] flex items-center gap-[2px]">
          <div className="w-[21px] h-[20px] border border-[#3a9fe0] bg-[#cce8ff] flex items-center justify-center">
            <Svg w={14} h={14}><path d="M1 2h3v3H1zM1 9h3v3H1z" stroke="#555" /><path d="M6 3h7M6 10h7" stroke="#555" /></Svg>
          </div>
          <div className="w-[17px] h-[14px] flex items-center justify-center">
            <Svg w={15} h={11}><rect x=".5" y=".5" width="14" height="10" fill="#dde6ef" stroke="#666" /><rect x="2" y="2" width="11" height="4" fill="#5f7c97" /></Svg>
          </div>
        </div>
      </div>
    </div>
  );
}

/* ---------- Taskbar ---------- */

const TrayItem = ({ children }: { children: ReactNode }) => (
  <div className="w-[24px] flex justify-center">{children}</div>
);

function Taskbar() {
  return (
    <div className="h-[40px] shrink-0 bg-[#04192a] flex items-center text-white mt-auto">
      <div className="w-[48px] flex justify-center">
        <Svg w={17} h={17}><path d="M0 2.500l7-1v6.500H0zM8 1.300 17 0v8H8zM0 9h7v6.500l-7-1zM8 9h9v8l-9-1.300z" fill="#fff" /></Svg>
      </div>
      <div className="w-[288px] h-[40px] bg-[#f3f3f3] border border-[#b8b8b8] flex items-center pl-[13px] gap-[10px] text-[#333] text-[14px]">
        <Svg w={16} h={16}><circle cx="10" cy="6" r="5" stroke="#333" /><path d="M6 10l-5 5" stroke="#333" strokeWidth="1.3" /></Svg>
        Type here to search
      </div>
      <div className="w-[50px] flex justify-center">
        <Svg w={16} h={16}><path d="M1 2h10M1 14h10M2 5h8v6H2zM14 1v3M14 6v3M14 11v4" stroke="#fff" /></Svg>
      </div>
      <div className="w-[50px] flex justify-center">
        <Svg w={24} h={24}>
          <path d="M12 0C5 0 0 5 0 12c0 7 5 12 11 12 4 0 7-1 10-5-5 2-12 1-12-6 0-3 3-4 6-4 4 0 5 2 9 1 0-6-5-10-12-10z" fill="#1d8fd6" />
          <path d="M23 10c-1-6-6-10-11-10-5 0-9 3-11 7 3-3 8-5 13-3 4 2 5 6 9 6z" fill="#45c77d" />
        </Svg>
      </div>
      <div className="w-[48px] h-full relative flex justify-center items-center">
        <Svg w={22} h={20}>
          <path d="M0 1h8l2 3h12v15H0z" fill="#f7d166" />
          <rect x="0" y="8" width="22" height="6" fill="#e9b84a" />
          <rect x="7" y="12" width="8" height="7" fill="#3a7fc2" />
        </Svg>
        <div className="absolute bottom-0 inset-x-0 h-[2px] bg-[#8ac4f0]" />
      </div>
      <div className="w-[50px] flex justify-center">
        <Svg w={24} h={24}>
          <circle cx="12" cy="13" r="11" fill="#f5732a" />
          <path d="M3 8c1-4 4-7 6-8 0 3 3 3 6 4 5 1 8 5 8 10-2-5-6-6-9-6z" fill="#ffb636" />
          <circle cx="12" cy="13" r="5" fill="#6e3cc9" />
          <path d="M7 10c3-3 8-2 10 2-3-1-6-2-10-2z" fill="#f0a030" />
        </Svg>
      </div>
      <div className="w-[48px] h-full bg-[#9c5f2f] relative flex items-center justify-center">
        <Svg w={24} h={22}>
          <rect x="8" y="1" width="16" height="20" fill="#28a8ea" />
          <rect x="16" y="1" width="8" height="10" fill="#50d9ff" />
          <rect x="8" y="11" width="8" height="10" fill="#0364b8" />
          <rect y="4" width="14" height="14" rx="1" fill="#0f78d4" />
          <circle cx="7" cy="11" r="3.500" stroke="#fff" strokeWidth="2" />
        </Svg>
        <div className="absolute bottom-0 inset-x-0 h-[2px] bg-[#ff8a1f]" />
      </div>
      <div className="ml-auto flex items-center pr-[14px]">
        <TrayItem><ChevronUp size={18} strokeWidth={1.5} /></TrayItem>
        <TrayItem>
          <Svg w={16} h={18}><rect x="5" y="1" width="11" height="16" fill="#28a8ea" /><rect y="4" width="11" height="10" fill="#0f78d4" /><circle cx="5.500" cy="9" r="2" stroke="#fff" strokeWidth="1.500" /></Svg>
        </TrayItem>
        <TrayItem>
          <Svg w={14} h={16}><rect x="1" y="4" width="8" height="8" rx="2" stroke="#fff" /><path d="M9 7l4-2v6l-4-2M3 1h5M3 15h5" stroke="#fff" /></Svg>
        </TrayItem>
        <TrayItem>
          <Svg w={17} h={15}><rect x="3" y=".5" width="13.500" height="10" stroke="#fff" /><rect x=".5" y=".5" width="4" height="5" fill="#04192a" stroke="#fff" /><path d="M10 11v3M6 14.500h8" stroke="#fff" /></Svg>
        </TrayItem>
        <TrayItem>
          <Svg w={17} h={15}><path d="M1 5h3l4-4v13l-4-4H1zM11 4c1 2 1 5 0 7M14 2c2 3 2 8 0 11" stroke="#fff" /></Svg>
        </TrayItem>
        <div className="w-[68px] text-center text-[11.5px] leading-[17px]">
          <div>3:17 PM</div>
          <div>4/29/2025</div>
        </div>
        <div className="w-[36px] flex justify-center">
          <Svg w={16} h={16}><path d="M.5 1h15v11H9l-2 3-2-3H.5z" stroke="#fff" /></Svg>
        </div>
      </div>
    </div>
  );
}

function Watermark() {
  return (
    <div className="absolute left-[1038px] top-[606px] flex items-center text-black/5 font-['Liberation_Sans',sans-serif] text-[58px] leading-none pointer-events-none">
      <span className="w-[66px] origin-left scale-x-[0.52]">ANY</span>
      <Svg w={62} h={68}><path d="M10 6v56l46-28zM20 22l20 12-20 12z" stroke="#000" strokeOpacity="0.05" strokeWidth="4" /></Svg>
      <span className="w-[66px] origin-left scale-x-[0.55]">RUN</span>
    </div>
  );
}

export default function App() {
  return (
    <div className="relative w-[1280px] h-[720px] overflow-hidden bg-white flex flex-col font-['Open_Sans',sans-serif]">
      <Outlook />
      <Taskbar />
      <Explorer />
      <Watermark />
    </div>
  );
}
